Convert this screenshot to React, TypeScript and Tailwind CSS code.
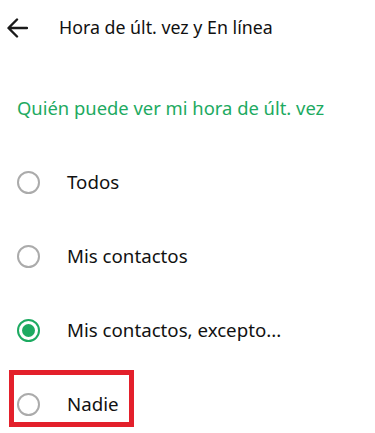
import { useState } from 'react'

const OPCIONES = ['Todos', 'Mis contactos', 'Mis contactos, excepto...', 'Nadie']

function Radio({ checked }: { checked: boolean }) {
  if (checked) {
    return (
      <span className="flex h-[23px] w-[23px] shrink-0 items-center justify-center rounded-full border-[2.5px] border-[#1daa61]">
        <span className="h-[13px] w-[13px] rounded-full bg-[#1daa61]" />
      </span>
    )
  }
  return (
    <span className="h-[23px] w-[23px] shrink-0 rounded-full border-[2.5px] border-[#ababab]" />
  )
}

export default function App() {
  const [seleccion] = useState(2)

  return (
    <div className="h-[433px] w-[375px] overflow-hidden bg-white font-['Noto_Sans','Open_Sans',sans-serif] text-[#111]">
      {/* Cabecera */}
      <header className="flex h-[56px] items-center">
        <button className="ml-[6px] flex h-[22px] w-[22px] items-center justify-center">
          <svg width="21" height="20" viewBox="0 0 21 20" fill="none">
            <path
              d="M20 10H2M10 1.5L1.5 10L10 18.5"
              stroke="#1a1a1a"
              strokeWidth="2.4"
              strokeLinecap="round"
              strokeLinejoin="round"
            />
          </svg>
        </button>
        <h1 className="ml-[31px] text-[17.8px] leading-none">
          Hora de últ. vez y En línea
        </h1>
      </header>

      <div className="pl-[17px] pt-[41px] text-[18.4px] leading-[22px] text-[#1daa61]">
        Quién puede ver mi hora de últ. vez
      </div>

      <ul className="mt-[26px]">
        {OPCIONES.map((op, i) => (
          <li key={op} className="relative flex h-[74px] items-center pl-[17px]">
            <Radio checked={i === seleccion} />
            <span className="ml-[27px] text-[18.7px] leading-none">{op}</span>
            {op === 'Nadie' && (
              <span className="pointer-events-none absolute left-[9px] top-[3px] h-[57px] w-[125px] border-[5px] border-[#e3202b]" />
            )}
          </li>
        ))}
      </ul>
    </div>
  )
}
